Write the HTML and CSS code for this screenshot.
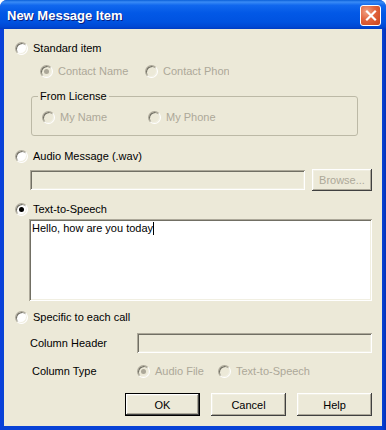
FILE: index.html
```html
<!DOCTYPE html>
<html lang="en">
<head>
  <meta charset="UTF-8">
  <title>New Message Item</title>
  <link rel="stylesheet" href="styles.css">
</head>
<body>
  <div class="window">
    <!-- Title bar -->
    <div class="titlebar">
      <span class="title">New Message Item</span>
      <button class="close" aria-label="Close">
        <svg width="18" height="19" viewBox="0 0 18 19">
          <path d="M5 5.5 L13 13.5 M13 5.5 L5 13.5" stroke="#fff" stroke-width="2.2" stroke-linecap="square"/>
        </svg>
      </button>
    </div>

    <div class="client">
      <div class="row">
        <label class="opt"><span class="radio"></span>Standard item</label>
      </div>

      <div class="row sub">
        <label class="opt off w105"><span class="radio dis checked"></span>Contact Name</label>
        <label class="opt off clip"><span class="radio dis"></span><span class="cut">Contact Phone</span></label>
      </div>

      <fieldset class="group">
        <legend>From License</legend>
        <div class="row in-group">
          <label class="opt off w106"><span class="radio dis"></span>My Name</label>
          <label class="opt off"><span class="radio dis"></span>My Phone</label>
        </div>
      </fieldset>

      <div class="row gap-12">
        <label class="opt"><span class="radio"></span>Audio Message (.wav)</label>
      </div>
      <div class="field-row file-row">
        <div class="edit dis file"></div>
        <button class="btn browse" disabled>Browse...</button>
      </div>

      <div class="row gap-10">
        <label class="opt"><span class="radio checked"></span>Text-to-Speech</label>
      </div>
      <div class="memo">Hello, how are you today<span class="caret"></span></div>

      <div class="row gap-8">
        <label class="opt"><span class="radio"></span>Specific to each call</label>
      </div>
      <div class="field-row header-row">
        <span class="lbl w107">Column Header</span>
        <div class="edit dis grow"></div>
      </div>
      <div class="row type-row">
        <span class="lbl w105">Column Type</span>
        <label class="opt off w81"><span class="radio dis checked"></span>Audio File</label>
        <label class="opt off"><span class="radio dis"></span>Text-to-Speech</label>
      </div>

      <div class="buttons">
        <button class="btn default">OK</button>
        <button class="btn">Cancel</button>
        <button class="btn">Help</button>
      </div>
    </div>
  </div>
</body>
</html>
```

FILE: styles.css
```css
* {
  box-sizing: border-box;
}

body {
  margin: 0;
  background: #fff;
  font-family: "Liberation Sans", Arial, sans-serif;
  font-size: 11px;
  color: #000;
}

/* Window frame */
.window {
  width: 386px;
  height: 430px;
  display: flex;
  flex-direction: column;
  background: linear-gradient(to right, #0a3ee0 0px, #0842d6 2px, #0842d6 382px, #0331b8 386px);
  border-radius: 7px 7px 0 0;
  overflow: hidden;
}

.titlebar {
  height: 29px;
  flex: none;
  display: flex;
  align-items: center;
  justify-content: space-between;
  padding: 2px 5px 0 7px;
  background: linear-gradient(to bottom, #0a5fd8 0%, #3a8cf6 7%, #1168ee 18%, #0258e6 45%, #0053e1 75%, #0048d4 92%, #003cc2 100%);
}

.title {
  color: #fff;
  font-weight: bold;
  font-size: 13px;
  text-shadow: 1px 1px #0a1e80;
}

.close {
  width: 21px;
  height: 21px;
  padding: 0;
  border: 1px solid #fff;
  border-radius: 3px;
  background: radial-gradient(circle at 30% 30%, #f0a184 0%, #e2643d 45%, #c9431a 100%);
  display: flex;
  align-items: center;
  justify-content: center;
}

/* Client area */
.client {
  flex: 1;
  margin: 0 4px 4px;
  background: #ece9d8;
  padding: 11px 10px 0 11px;
  display: flex;
  flex-direction: column;
}

.row {
  display: flex;
  align-items: center;
  height: 16px;
  white-space: nowrap;
}

.sub {
  margin-top: 7px;
  padding-left: 25px;
}

.gap-8 { margin-top: 8px; }
.gap-10 { margin-top: 10px; }
.gap-12 { margin-top: 12px; }

.opt {
  display: flex;
  align-items: center;
  flex: none;
}

.off {
  color: #aca899;
}

.w81 { width: 81px; }
.w105 { width: 105px; }
.w106 { width: 106px; }
.w107 { width: 107px; }

.cut {
  display: inline-block;
  width: 66px;
  overflow: hidden;
}

/* Classic radio */
.radio {
  position: relative;
  width: 13px;
  height: 13px;
  flex: none;
  margin-right: 5px;
  border-radius: 50%;
  background: #fff;
  border: 1px solid;
  border-color: #aca899 #fff #fff #aca899;
  box-shadow: inset 1px 1px #716f64, inset -1px -1px #f1efe2;
}

.radio.dis {
  background: #ece9d8;
}

.radio.checked::after {
  content: "";
  position: absolute;
  left: 3px;
  top: 3px;
  width: 5px;
  height: 5px;
  border-radius: 50%;
  background: #000;
}

.radio.dis.checked::after {
  background: #aca899;
}

/* Group box */
.group {
  margin: 11px 14px 0 16px;
  padding: 6px 0 10px 6px;
  border: 1px solid #bcb9a6;
  border-radius: 3px;
  min-width: 0;
}

.group legend {
  padding: 0 2px;
  line-height: 13px;
}

.in-group {
  padding-left: 4px;
}

/* Edits */
.field-row {
  display: flex;
  align-items: center;
}

.edit {
  height: 20px;
  background: #fff;
  box-shadow: inset 1px 1px #aca899, inset -1px -1px #fff, inset 2px 2px #716f64, inset -2px -2px #f1efe2;
}

.edit.dis {
  background: #ece9d8;
}

.file-row {
  height: 22px;
  margin-top: 5px;
  padding-left: 15px;
}

.file {
  width: 275px;
}

.header-row {
  height: 20px;
  margin-top: 8px;
  padding-left: 15px;
}

.grow {
  flex: 1;
}

.lbl {
  display: inline-block;
  flex: none;
}

.type-row {
  margin-top: 10px;
  padding-left: 17px;
}

.memo {
  margin: 2px 0 0 14px;
  height: 82px;
  padding: 3px 3px;
  line-height: 13px;
  background: #fff;
  box-shadow: inset 1px 1px #aca899, inset -1px -1px #fff, inset 2px 2px #716f64, inset -2px -2px #f1efe2;
}

.caret {
  display: inline-block;
  width: 1px;
  height: 13px;
  background: #000;
  vertical-align: top;
}

/* Buttons */
.btn {
  width: 75px;
  height: 23px;
  padding: 0;
  border: none;
  background: #ece9d8;
  font-family: inherit;
  font-size: 11px;
  color: #000;
  box-shadow: inset -1px -1px #404040, inset 1px 1px #fff, inset -2px -2px #aca899, inset 2px 2px #f1efe2;
}

.btn:disabled {
  color: #aca899;
}

.browse {
  width: 60px;
  height: 22px;
  margin-left: 7px;
}

.btn.default {
  box-shadow: inset 0 0 0 1px #000, inset -2px -2px #404040, inset 2px 2px #fff, inset -3px -3px #aca899, inset 3px 3px #f1efe2;
}

.buttons {
  display: flex;
  justify-content: flex-end;
  gap: 11px;
  margin-top: 14px;
}
```
